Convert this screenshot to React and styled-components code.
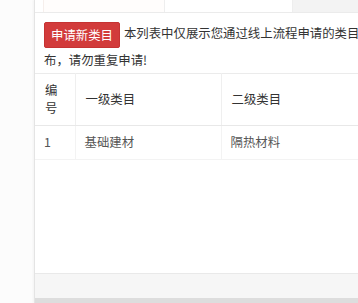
import React from "react";
import styled, { createGlobalStyle } from "styled-components";

const Global = createGlobalStyle`
  html, body { margin: 0; padding: 0; overflow: hidden; background: #fcfcfc; }
  body { font-family: "Noto Sans CJK SC", "Noto Sans", sans-serif; }
`;

const Page = styled.div`
  display: flex;
  width: 358px;
  height: 303px;
  overflow: hidden;
  background: #fcfcfc;
`;

const Gutter = styled.div`
  flex: 0 0 34px;
`;

const Panel = styled.div`
  flex: 0 0 640px;
  display: flex;
  flex-direction: column;
  background: #fff;
  border-left: 1px solid #e4e4e4;
  box-shadow: -1px 0 2px rgba(0, 0, 0, 0.04);
`;

const Tabs = styled.div`
  display: flex;
  height: 12px;
  padding-left: 8px;
  border-bottom: 1px solid #ebebeb;
`;

const Tab = styled.div`
  flex: 0 0 ${(p) => p.$w}px;
  background: ${(p) => (p.$active ? "#fffdfc" : "#fff")};
  border-right: 1px solid #eeeeee;
  border-left: ${(p) => (p.$active ? "1px solid #f6efec" : "none")};
`;

const TabRest = styled.div`
  flex: 1;
  background: #f3f3f3;
`;

const Notice = styled.div`
  padding: 8px 9px 0 9px;
  font-size: 12.4px;
  line-height: 24px;
  color: #333;
`;

const RedButton = styled.span`
  display: inline-block;
  box-sizing: border-box;
  height: 26px;
  line-height: 24px;
  padding: 0 6px;
  margin-right: 4px;
  background: #d23b3b;
  border: 1px solid #c53333;
  border-radius: 2px;
  color: #fff;
  font-size: 12.4px;
  vertical-align: middle;
`;

const Table = styled.table`
  border-collapse: collapse;
  width: 100%;
  margin-top: 1px;
  table-layout: fixed;
  font-size: 12.4px;
`;

const Th = styled.th`
  text-align: left;
  font-weight: normal;
  color: #333;
  height: 52px;
  box-sizing: border-box;
  padding: 0 10px;
  line-height: 18px;
  vertical-align: middle;
  border-top: 1px solid #ebebeb;
  border-bottom: 1px solid #e8e8e8;
  border-right: 1px solid #efefef;
  width: ${(p) => (p.$w ? `${p.$w}px` : "auto")};
`;

const Td = styled.td`
  color: #555;
  height: 33px;
  padding: 0 9px;
  vertical-align: middle;
  border-bottom: 1px solid #f3f3f3;
  border-right: 1px solid #f3f3f3;
`;

const Spacer = styled.div`
  flex: 1;
`;

const Footer = styled.div`
  height: 24px;
  background: #f6f6f6;
  border-top: 1px solid #e9e9e9;
`;

const BottomBar = styled.div`
  height: 5px;
  background: #dddddd;
`;

export default function App() {
  return (
    <>
      <Global />
      <Page>
        <Gutter />
        <Panel>
          <Tabs>
            <Tab $w={120} $active />
            <Tab $w={127} />
            <TabRest />
          </Tabs>
          <Notice>
            <RedButton>申请新类目</RedButton>
            本列表中仅展示您通过线上流程申请的类目提交记录，线下申请的类目将另行发
            <br />
            布，请勿重复申请!
          </Notice>
          <Table>
            <colgroup>
              <col style={{ width: 40 }} />
              <col style={{ width: 146 }} />
              <col />
            </colgroup>
            <thead>
              <tr>
                <Th>编号</Th>
                <Th>一级类目</Th>
                <Th>二级类目</Th>
              </tr>
            </thead>
            <tbody>
              <tr>
                <Td>1</Td>
                <Td>基础建材</Td>
                <Td>隔热材料</Td>
              </tr>
            </tbody>
          </Table>
          <Spacer />
          <Footer />
          <BottomBar />
        </Panel>
      </Page>
    </>
  );
}
